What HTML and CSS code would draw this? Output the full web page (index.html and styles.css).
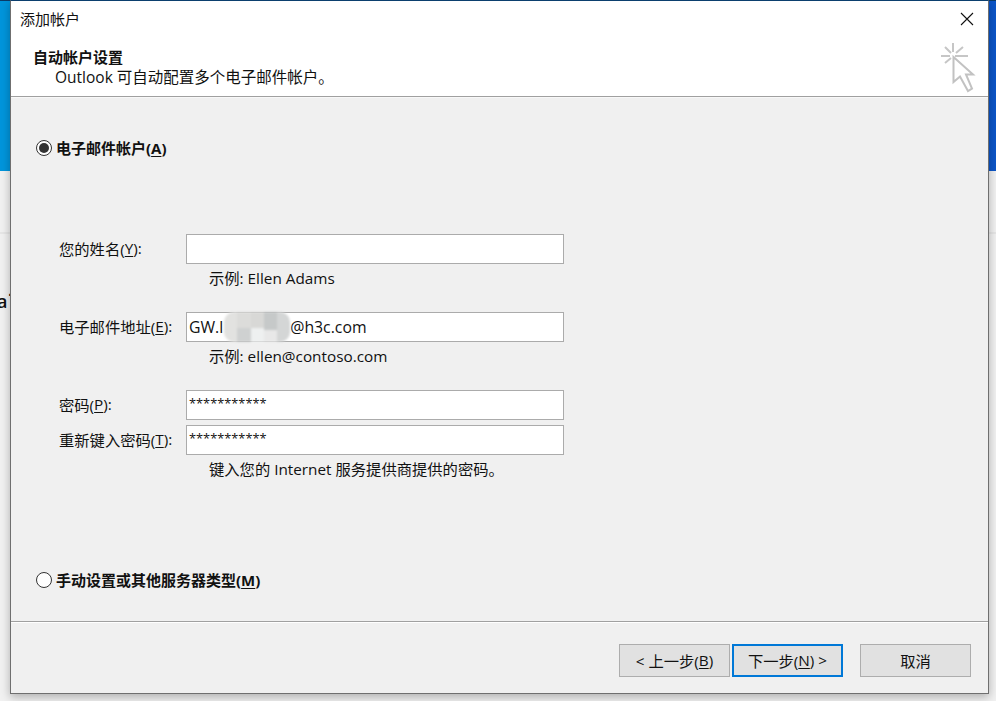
FILE: index.html
```html
<!DOCTYPE html>
<html lang="zh-CN">
<head>
<meta charset="utf-8">
<title>添加帐户</title>
<link rel="stylesheet" href="styles.css">
</head>
<body>
<div class="desktop">
  <div class="bg-top"></div>
  <div class="bg-rest"><span class="bg-letter">a了</span></div>
  <div class="window">
    <div class="titlebar">
      <span class="title">添加帐户</span>
      <svg class="close" width="14" height="14" viewBox="0 0 14 14"><path d="M1 1 L13 13 M13 1 L1 13" stroke="#111" stroke-width="1.1" fill="none"/></svg>
    </div>
    <div class="header">
      <div class="header-text">
        <div class="header-title">自动帐户设置</div>
        <div class="header-sub">Outlook 可自动配置多个电子邮件帐户。</div>
      </div>
      <svg class="wizard" width="36" height="53" viewBox="0 0 36 53">
        <path d="M13 0 V9 M5 4 L11 10 M23 4 L16 10 M1 13 H10 M15 13 H28 M5 20 L11 15" stroke="#c6c6c6" stroke-width="2" fill="none"/>
        <path d="M13.500 14 V39 L20 33.500 L28 48 L32 45.500 L26 31.500 H33 Z" stroke="#c2c2c2" stroke-width="2" fill="#fff"/>
      </svg>
    </div>
    <div class="content">
      <label class="radio-row first">
        <span class="radio checked"></span>
        <span class="radio-label">电子邮件帐户(<u>A</u>)</span>
      </label>
      <div class="form">
        <div class="field-label">您的姓名(<u>Y</u>):</div>
        <div class="input"></div>
        <div class="hint">示例: Ellen Adams</div>
        <div class="field-label gap">电子邮件地址(<u>E</u>):</div>
        <div class="input gap email"><span>GW.l</span><span class="redacted"><i class="m1"></i><i class="m2"></i><i class="m3"></i><i class="m4"></i><i class="m5"></i></span><span>@h3c.com</span></div>
        <div class="hint">示例: ellen@contoso.com</div>
        <div class="field-label gap">密码(<u>P</u>):</div>
        <div class="input gap stars">***********</div>
        <div class="field-label tight">重新键入密码(<u>T</u>):</div>
        <div class="input tight stars">***********</div>
        <div class="hint">键入您的 Internet 服务提供商提供的密码。</div>
      </div>
      <label class="radio-row second">
        <span class="radio"></span>
        <span class="radio-label">手动设置或其他服务器类型(<u>M</u>)</span>
      </label>
    </div>
    <div class="footer">
      <div class="btn">&lt; 上一步(<u>B</u>)</div>
      <div class="btn primary">下一步(<u>N</u>) &gt;</div>
      <div class="btn cancel">取消</div>
    </div>
  </div>
</div>
</body>
</html>
```

FILE: styles.css
```css
* { box-sizing: border-box; }
html, body { margin: 0; padding: 0; }
body {
  width: 996px;
  height: 701px;
  overflow: hidden;
  font-family: "Open Sans", "Noto Sans CJK SC", sans-serif;
  font-size: 15.3px;
  color: #111;
}
u { text-underline-offset: 2px; text-decoration-thickness: 1px; }

.desktop {
  position: relative;
  width: 996px;
  height: 701px;
  display: flex;
  flex-direction: column;
  background: #f0f0f0;
}
.bg-top {
  height: 171px;
  background: linear-gradient(90deg, #0095dc 0, #0095dc 11px, #0c55c8 11px);
  border-top: 1px solid #0b3a66;
}
.bg-rest {
  flex: 1;
  padding-top: 61px;
  background: #f1f1f1;
}
.bg-letter {
  display: block;
  border-top: 2px solid #e6e6e6;
  padding-top: 56px;
  text-indent: -3px;
  color: #111;
  font-size: 18px;
  line-height: 22px;
  font-weight: 600;
  white-space: nowrap;
}

.window {
  position: absolute;
  left: 10px;
  top: 0;
  width: 979px;
  height: 694px;
  display: flex;
  flex-direction: column;
  background: #f0f0f0;
  border: 1px solid #6f6f6f;
  border-top-color: #0b3f6e;
  box-shadow: 0 3px 9px rgba(0, 0, 0, 0.28);
}

.titlebar {
  height: 37px;
  flex: none;
  display: flex;
  align-items: center;
  justify-content: space-between;
  padding: 0 14px 2px 9px;
  background: #fff;
}
.title { font-size: 15px; }
.close { display: block; }

.header {
  height: 59px;
  flex: none;
  display: flex;
  justify-content: space-between;
  background: #fff;
  border-bottom: 1px solid #a0a0a0;
  padding: 0 12px 0 22px;
}
.header-title { font-weight: 700; font-size: 15px; line-height: 20px; margin-top: 9px; }
.header-sub { font-size: 15.5px; line-height: 21px; padding-left: 22px; }
.wizard { display: block; margin: 5px 0 0; }

.content {
  flex: 1;
  display: flex;
  flex-direction: column;
  padding: 0 0 0 25px;
  border-top: 1px solid #f8f8f8;
  border-bottom: 1px solid #a0a0a0;
  box-shadow: 0 1px 0 #fff;
}
.radio-row { display: flex; align-items: center; gap: 4px; height: 20px; font-weight: 700; font-size: 15px; }
.radio-label { padding-bottom: 2px; }
.radio-row.first { margin-top: 40px; }
.radio-row.second { margin-top: 85px; }
.radio {
  width: 16px;
  height: 16px;
  flex: none;
  border-radius: 50%;
  background: #fff;
  border: 1px solid #333;
  position: relative;
}
.radio.checked::after {
  content: "";
  position: absolute;
  left: 2px;
  top: 2px;
  width: 10px;
  height: 10px;
  border-radius: 50%;
  background: #333;
}

.form {
  display: grid;
  grid-template-columns: 127px 378px;
  margin: 76px 0 0 23px;
}
.field-label { display: flex; align-items: center; height: 30px; padding-bottom: 2px; white-space: pre; }
.input {
  height: 30px;
  background: #fff;
  border: 1px solid #ababab;
  padding: 0 2px 1px;
  display: flex;
  align-items: center;
  font-size: 15.8px;
}
.stars { font-size: 12.8px; padding-bottom: 4px; }
.hint { grid-column: 2; padding-left: 23px; height: 30px; line-height: 28px; }
.gap { margin-top: 18px; }
.field-label.tight, .input.tight { margin-top: 5px; }

.redacted {
  width: 66px;
  height: 30px;
  margin-left: 1px;
  display: flex;
  flex: none;
  filter: blur(1px);
  border-radius: 10px;
  overflow: hidden;
}
.redacted i { flex: 1; display: block; }
.m1 { background: #e2e2e0; }
.m2 { background: linear-gradient(#dcdcda, #dcdcda 55%, #cfd1d1 55%); }
.m3 { background: linear-gradient(#d8d8d6 55%, #eef0f0 55%); }
.m4 { background: linear-gradient(#c6c9c9, #c6c9c9 60%, #e8e8e8 60%); }
.m5 { background: #d4d6d6; }

.footer {
  flex: none;
  height: 71px;
  display: flex;
  align-items: flex-start;
  padding: 22px 0 0 608px;
  gap: 2px;
}
.btn {
  width: 111px;
  height: 33px;
  padding-bottom: 2px;
  background: #e1e1e1;
  border: 1px solid #adadad;
  display: flex;
  align-items: center;
  justify-content: center;
  white-space: pre;
}
.btn.primary { border: 2px solid #0078d7; }
.btn.cancel { margin-left: 15px; }
```
